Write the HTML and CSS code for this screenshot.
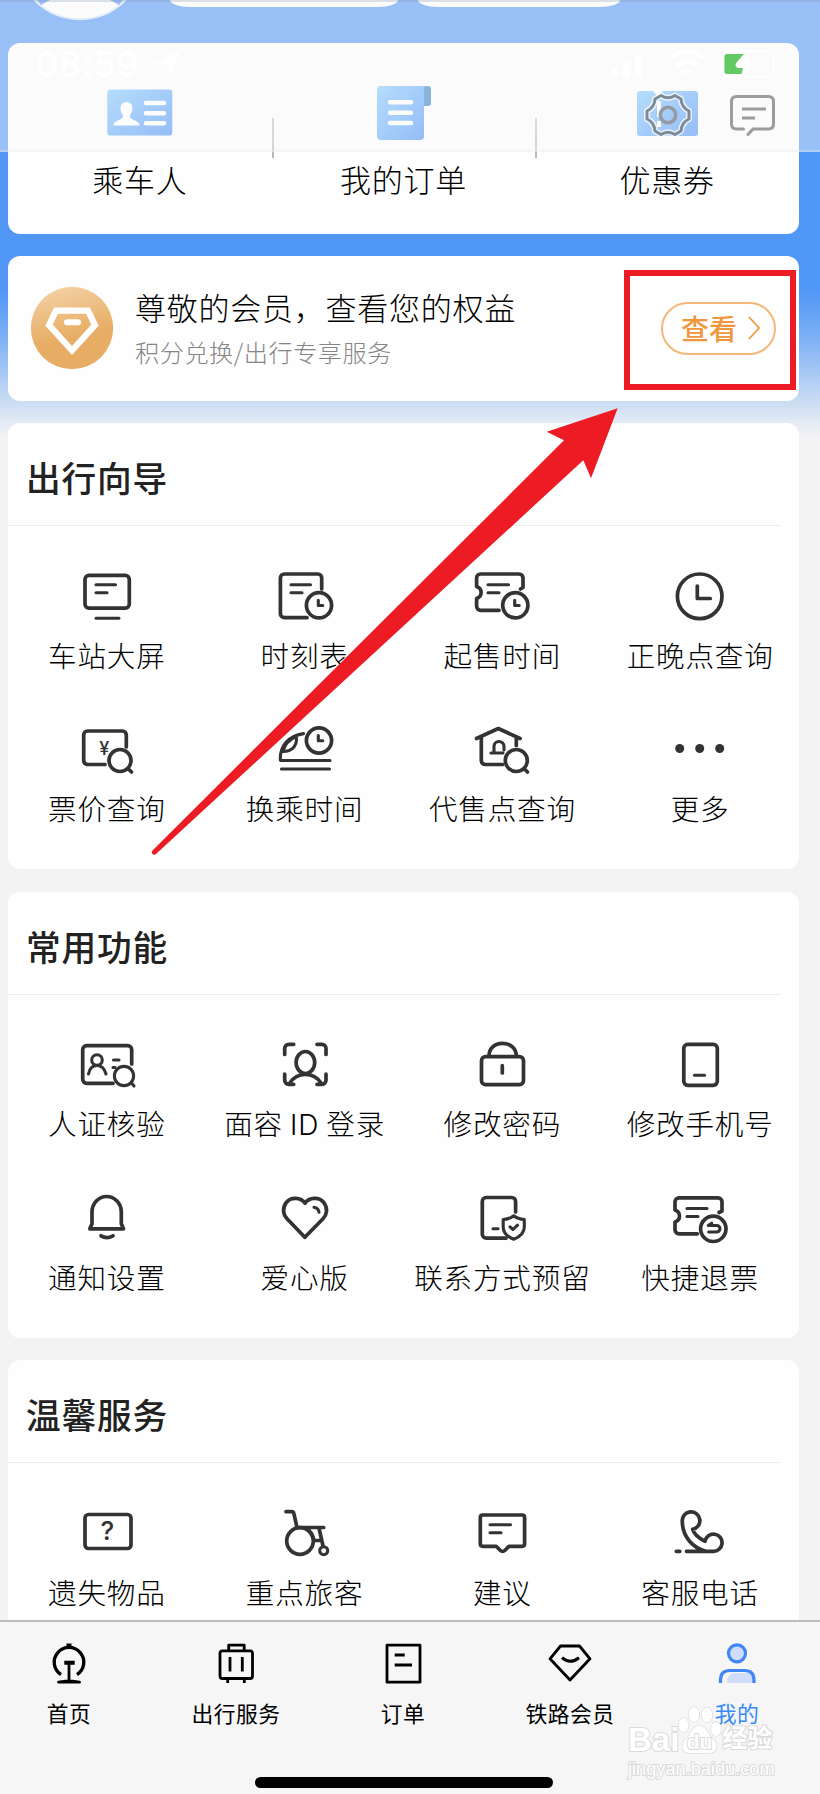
FILE: index.html
```html
<!DOCTYPE html>
<html lang="zh-CN">
<head>
<meta charset="utf-8">
<title>我的</title>
<link rel="stylesheet" href="styles.css">
</head>
<body>
<div class="phone">
  <main class="content">
    <div class="profile">
      <svg class="avatar" width="130" height="20" viewBox="0 0 130 20"><circle cx="65" cy="-45" r="64" fill="#fff" stroke="#d6e6fa" stroke-width="2"/><path d="M22 0h13l-9 5zM108 0H95l9 5z" fill="#4f96f5"/></svg>
      <span class="pill pill-wide"></span>
      <span class="pill"></span>
    </div>

    <section class="card shortcuts">
      <div class="shortcut">
        <svg class="pic" width="70" height="60" viewBox="0 0 70 60"><defs><linearGradient id="g" x1="0" y1="0" x2="1" y2="1"><stop offset="0" stop-color="#82c8fc"/><stop offset="1" stop-color="#4a90f7"/></linearGradient></defs><rect x="2.3" y="6.5" width="65" height="46" rx="3" fill="url(#g)"/><path d="M21.500 19c-4 0-6.300 3-6 7 .2 3 1.500 4.500 2.500 6.500 0 3-2 3.500-5.500 5C10 38.700 8.500 40 8.300 42.500h26.300c-.3-2.500-2-3.800-4.500-5-3.300-1.500-5.300-2-5.300-5 1-2 2.500-3.500 2.700-6.500.3-4-2-7-6-7z" fill="#fff"/><path d="M41 20h18M41 30.300h18M41 40.300h18" stroke="#fff" stroke-width="4.500" stroke-linecap="round"/></svg>
        <span>乘车人</span>
      </div>
      <div class="shortcut">
        <svg class="pic" width="70" height="60" viewBox="0 0 70 60"><path d="M54 3h6a3 3 0 0 1 3 3v14a3 3 0 0 1-3 3h-6z" fill="#387fcb"/><path d="M13 3h44a6 6 0 0 0-1 5v45a4 4 0 0 1-4 4H13a4 4 0 0 1-4-4V7a4 4 0 0 1 4-4z" fill="url(#g)"/><path d="M22 19.300h21M22 29.700h21M22 40h21" stroke="#fff" stroke-width="4.500" stroke-linecap="round"/></svg>
        <span>我的订单</span>
      </div>
      <div class="shortcut">
        <svg class="pic" width="70" height="60" viewBox="0 0 70 60"><path d="M8 8h13l5 6 5-6h32a3 3 0 0 1 3 3v39a3 3 0 0 1-3 3H8a3 3 0 0 1-3-3V11a3 3 0 0 1 3-3z" fill="url(#g)"/><path d="M27 18v26" stroke="#fff" stroke-width="4" stroke-dasharray="16 4"/></svg>
        <span>优惠券</span>
      </div>
    </section>

    <section class="card member">
      <svg width="84" height="84" viewBox="0 0 84 84"><defs><linearGradient id="gold" x1=".4" y1="0" x2=".55" y2=".6"><stop offset="0" stop-color="#f3cfa2"/><stop offset="1" stop-color="#e7ad64"/></linearGradient></defs><circle cx="42" cy="42" r="41.200" fill="url(#gold)"/><path d="M26 24.700h32l7 14.500L42 64.500 19 39.200z" fill="none" stroke="#fff" stroke-width="6.200"/><path d="M37 36.300h11" stroke="#fff" stroke-width="6" stroke-linecap="round"/></svg>
      <div class="member-text">
        <div class="member-title">尊敬的会员，查看您的权益</div>
        <div class="member-sub">积分兑换/出行专享服务</div>
      </div>
      <div class="view-btn"><span>查看</span><svg width="14" height="26" viewBox="0 0 14 26"><path d="M2 2l10 11L2 24" fill="none" stroke="#f0963c" stroke-width="1.800"/></svg></div>
    </section>

    <section class="card group">
      <h2>出行向导</h2>
      <div class="grid">
        <div class="item"><svg viewBox="0 0 80 60"><rect x="18" y="10.400" width="44.300" height="32.800" rx="4"/><path class="thin" d="M29 19.700h19.500M29 27.700h11M29 53.300h23"/></svg><span>车站大屏</span></div>
        <div class="item"><svg viewBox="0 0 80 60"><path d="M56.700 24V13a4 4 0 0 0-4-4H19.400a4 4 0 0 0-4 4v35.700a4 4 0 0 0 4 4H42"/><circle cx="54" cy="40.300" r="12.600"/><path class="thin" d="M26 19.700h19.500M26 27.700h11M53.300 35.300v5.200h4.500"/></svg><span>时刻表</span></div>
        <div class="item"><svg viewBox="0 0 80 60"><path d="M58.500 24l2.500-1.500V13a4 4 0 0 0-4-4H18.600a4 4 0 0 0-4 4v8.500c3 1 4.500 3 4.500 6s-1.500 5-4.500 6v7.800a4 4 0 0 0 4 4H37"/><circle cx="53.300" cy="40.300" r="12.600"/><path class="thin" d="M26 19.700h20.500M26 27.700h11M52.700 35.300v5.200h4.500"/></svg><span>起售时间</span></div>
        <div class="item"><svg viewBox="0 0 80 60"><circle cx="39.700" cy="31.300" r="22.300"/><path d="M37.300 21v12.500h13"/></svg><span>正晚点查询</span></div>
        <div class="item"><svg viewBox="0 0 80 60"><path d="M59.300 28V16a4 4 0 0 0-4-4H20.700a4 4 0 0 0-4 4v25.500a4 4 0 0 0 4 4H38"/><circle cx="53" cy="41.500" r="11"/><path d="M61 49.500l3.500 3.500"/><text class="glyph" x="37.300" y="35.500" font-size="18">¥</text></svg><span>票价查询</span></div>
        <div class="item"><svg viewBox="0 0 80 60"><path class="thin" d="M38.500 14.600C23 17 14.500 27 15.400 41.500H65M16.500 50H64.500M31 17.500c2 8-3 15-13 15"/><path class="thin" d="M31 17.500c-7 3-11.500 8-13 15"/><circle cx="54" cy="21.500" r="12.600"/><path class="thin" d="M53.300 16.500v5.200h4.500"/></svg><span>换乘时间</span></div>
        <div class="item"><svg viewBox="0 0 80 60"><path d="M14.500 19.500l21.800-10 21.800 10M19.300 19v22.500a4 4 0 0 0 4 4H40.500M54.300 19v7.500"/><path class="thin" d="M29 34h12M32 34v-6.500a5 5 0 0 1 10 0V31"/><circle cx="54.300" cy="41.500" r="11"/><path d="M62 49.500l3.500 3.500"/></svg><span>代售点查询</span></div>
        <div class="item"><svg viewBox="0 0 80 60"><g class="solid"><circle cx="19.700" cy="29.500" r="4.500"/><circle cx="39.700" cy="29.500" r="4.500"/><circle cx="59.700" cy="29.500" r="4.500"/></g></svg><span>更多</span></div>
      </div>
    </section>

    <section class="card group">
      <h2>常用功能</h2>
      <div class="grid">
        <div class="item"><svg viewBox="0 0 80 60"><path d="M64.700 30V15.700a4 4 0 0 0-4-4H19.700a4 4 0 0 0-4 4v29.600a4 4 0 0 0 4 4H46"/><circle class="thin" cx="30" cy="26" r="5.300"/><path class="thin" d="M21.500 40c1-5.500 4-8.500 8.500-8.500s7.500 3 9 8.500M46.500 26H52M46 33.500h2M64.500 49l2.500 3"/><circle class="thin" cx="57" cy="42" r="9.600"/></svg><span>人证核验</span></div>
        <div class="item"><svg viewBox="0 0 80 60"><path d="M19.700 20.500v-6.200a4 4 0 0 1 4-4h5M52 10.300h5a4 4 0 0 1 4 4v6.200M19.700 40v6.300a4 4 0 0 0 4 4h5M52 50.300h5a4 4 0 0 0 4-4V40M24.700 49c4-6 9-8.500 15.700-8.500s11.700 2.500 15.700 8.500"/><ellipse cx="40.400" cy="28.500" rx="9.300" ry="11"/></svg><span>面容 <span class="latin">ID</span> 登录</span></div>
        <div class="item"><svg viewBox="0 0 80 60"><rect x="19.500" y="22.700" width="42" height="28" rx="4"/><path d="M27 22c0-7.500 5.500-12.700 13.500-12.700S54.300 14.500 54.300 22M40.300 31.500v7.500"/></svg><span>修改密码</span></div>
        <div class="item"><svg viewBox="0 0 80 60"><rect x="23.800" y="10.300" width="33.500" height="41" rx="4"/><path class="thin" d="M34.500 41.300h10"/></svg><span>修改手机号</span></div>
        <div class="item"><svg viewBox="0 0 80 60"><path d="M22.800 41.800l2.200-5V25a14.650 15.500 0 0 1 29.300 0v11.800l2.200 5zM34 48.800q5.700 3.500 12 0"/></svg><span>通知设置</span></div>
        <div class="item"><svg viewBox="0 0 80 60"><path d="M40 16.200C36 10.500 26 9.500 21.300 15.500c-4.500 6-3 12.500 1 16.500L39.800 50.300 57.800 32c4-4 5.500-10.500 1-16.500C54 9.500 44 10.500 40 16.200z"/><path class="thin" d="M49 20.200q4.500.8 5 5"/></svg><span>爱心版</span></div>
        <div class="item"><svg viewBox="0 0 80 60"><path d="M53.600 25V14.500a4 4 0 0 0-4-4H24.300a4 4 0 0 0-4 4v32.700a4 4 0 0 0 4 4H44"/><path class="thin" d="M31 41.800h5M51.700 28.800c3 2.500 6.500 3.500 10.600 3.700V40c0 6-5 10-10.600 12.300C46 50 41.200 46 41.200 40v-7.500c4-.2 7.500-1.200 10.500-3.700zM48 39.800l3 2.700 4.500-4.300"/></svg><span>联系方式预留</span></div>
        <div class="item"><svg viewBox="0 0 80 60"><path d="M59 25.500l3-1.500v-9.200a4 4 0 0 0-4-4H19a4 4 0 0 0-4 4V23c3 1 4.500 3 4.500 6S18 34 15 35v7.800a4 4 0 0 0 4 4h18.300"/><circle cx="53.300" cy="41.800" r="12.700"/><path class="thin" d="M27 21.500h20M27 29.500h11M51.700 36.200l-3.500 2.300h8.500a3.200 3.200 0 0 1 0 6.500h-8"/></svg><span>快捷退票</span></div>
      </div>
    </section>

    <section class="card group">
      <h2>温馨服务</h2>
      <div class="grid">
        <div class="item"><svg viewBox="0 0 80 60"><rect x="18" y="12.500" width="46" height="34" rx="3.500"/><text class="glyph" x="40.300" y="38" font-size="26">?</text></svg><span>遗失物品</span></div>
        <div class="item"><svg viewBox="0 0 80 60"><path d="M21 9.700h5.500q2 0 2.400 2L32 25.500h26.700M54 26l4 18M48.700 38.500h7.500M41 26q6 4 7.500 11"/><circle cx="35" cy="39" r="13.300"/><circle class="thin" cx="58.700" cy="48.700" r="4"/></svg><span>重点旅客</span></div>
        <div class="item"><svg viewBox="0 0 80 60"><path d="M20.800 13h39.300q2.500 0 2.500 2.500v26.300q0 2.500-2.500 2.500H47l-4 4q-2.400 2-4.800 0l-4-4H20.800q-2.500 0-2.500-2.500V15.500q0-2.500 2.500-2.500z"/><path class="thin" d="M28 22.700h20.500M28 30.700h11"/></svg><span>建议</span></div>
        <div class="item"><svg viewBox="0 0 80 60"><path d="M16.300 49.300h3.500M26.500 49.300h26.200a8.600 8.600 0 1 0-7.700-10c-6-3-11-7-12.300-12A8.800 8.800 0 1 0 22.300 19.500C22.500 35 33 46 46 49.300"/></svg><span>客服电话</span></div>
      </div>
    </section>
  </main>

  <nav class="tabbar">
    <div class="tab"><svg viewBox="0 0 48 48"><path d="M16 34.700a14.800 14.800 0 1 1 16 0" stroke-width="3.300"/><path d="M21.500 5.500h5M19.300 22.700h10.400" stroke-width="4"/><path d="M24 24v18M13.500 42.200l7-1h7l7 1z"/></svg><span>首页</span></div>
    <div class="tab"><svg viewBox="0 0 48 48"><rect x="8" y="10.800" width="32.500" height="27.700" rx="2.500"/><path d="M16.700 10V5.200h15.500V10M18 17v14.500M30.300 17v14.500M15.700 39v4M32.300 39v4"/></svg><span>出行服务</span></div>
    <div class="tab"><svg viewBox="0 0 48 48"><path d="M8 5.200h33v37H8zM15.700 15h10M15.700 25H33"/></svg><span>订单</span></div>
    <div class="tab"><svg viewBox="0 0 48 48"><path d="M14.500 6h19L44 18.800 24 40 4 18.800z"/><path d="M16 17.700q8 7 17 0" stroke-width="3"/></svg><span>铁路会员</span></div>
    <div class="tab active"><svg viewBox="0 0 48 48"><circle cx="24" cy="13.300" r="8.500" fill="#cfddf8"/><path d="M14 43q0-10 8-10h19v10z" fill="#cfddf8" stroke="none"/><path d="M7.500 43v-3q0-9.500 9.500-9.500h14.500q9.500 0 9.500 9.500v3"/></svg><span>我的</span></div>
  </nav>

  <div class="header">
    <div class="status">
      <span class="clock">08:59</span>
      <svg class="locate" width="32" height="32" viewBox="0 0 32 32"><path d="M3 16L29 3 18 30V16z" fill="#fff"/></svg>
      <svg class="signals" width="190" height="36" viewBox="0 0 190 36"><g fill="#fff"><rect x="11" y="22" width="7" height="9" rx="2"/><rect x="23" y="16" width="7" height="15" rx="2"/><rect x="35" y="10" width="7" height="21" rx="2"/></g><path d="M70 12q17-13 34 0M76 20q11-8 22 0M82 27q5-4 10 0" fill="none" stroke="#fff" stroke-width="4"/><rect x="122" y="5" width="52" height="26" rx="7" fill="none" stroke="#fff" stroke-width="2"/><path d="M127 8h17l-8 9q-1.500 4 2 5h5l-1.500 6H127q-2.500 0-2.500-2.500v-15Q124.500 8 127 8z" fill="#63ca61"/><path d="M149 8l-9 11h6l-3 10 12-13h-6z" fill="#fff"/></svg>
    </div>
    <div class="actions">
      <svg width="50" height="50" viewBox="0 0 50 50"><g fill="none" stroke-linejoin="round"><path d="M18 5.500Q25 10 32 5.500L38 9Q38.500 17.500 46 21V29Q38.500 32.500 38 41L32 44.500Q25 40 18 44.500L12 41Q11.500 32.500 4 29V21Q11.500 17.500 12 9Z" stroke="#fff" stroke-opacity=".75" stroke-width="6"/><path d="M18 5.500Q25 10 32 5.500L38 9Q38.500 17.500 46 21V29Q38.500 32.500 38 41L32 44.500Q25 40 18 44.500L12 41Q11.500 32.500 4 29V21Q11.500 17.500 12 9Z" stroke="#7f8a97" stroke-width="3"/><circle cx="25" cy="25" r="7.700" stroke="#949aa2" stroke-width="3.600"/></g></svg>
      <svg width="50" height="50" viewBox="0 0 50 50"><path d="M16.500 39H9.500Q4.500 39 4.500 34V11.500Q4.500 6.500 9.500 6.500h32q5 0 5 5V34q0 5-5 5H26l-5 5.500" fill="none" stroke="#9c9c9c" stroke-width="3" stroke-linecap="round"/><path d="M15 19h24M15 28h13" stroke="#9c9c9c" stroke-width="3"/></svg>
    </div>
  </div>

  <div class="watermark">
    <div class="wm-top"><span>Bai</span><svg width="44" height="48" viewBox="0 0 44 48"><g fill="#fff" stroke="#dcdcdc" stroke-width="1.300"><ellipse cx="5.500" cy="19" rx="5" ry="7"/><ellipse cx="16" cy="8.500" rx="5.300" ry="7.500"/><ellipse cx="29" cy="9" rx="5.300" ry="7.500"/><ellipse cx="38" cy="23" rx="5" ry="7"/><path d="M21 20c-7 0-7 7-12 12-6 5-7 15 4 15h17c11 0 10-10 4-15-5-5-6-12-13-12z"/></g><text x="21.500" y="43" text-anchor="middle" class="wm-du">du</text></svg><span class="wm-cn">经验</span></div>
    <div class="wm-url">jingyan.baidu.com</div>
  </div>
  <div class="home-bar"></div>
  <svg class="marks" width="820" height="1794" viewBox="0 0 820 1794"><rect x="627" y="273" width="166" height="114" fill="none" stroke="#ed1c24" stroke-width="6"/><path d="M617.700 408.300L546.700 431.700 564 440.300 152.500 850.500q-1.500 2 0 3.500t3.500 0L583.300 460.300 591 478.300z" fill="#ed1c24"/></svg>
</div>
</body>
</html>
```

FILE: styles.css
```css
* { box-sizing: border-box; }
body { margin: 0; }
.phone {
  position: relative;
  display: flex;
  flex-direction: column;
  width: 820px;
  height: 1794px;
  overflow: hidden;
  color: #000;
  font-family: "Noto Sans CJK SC", sans-serif;
  font-weight: 300;
  background: #f3f3f4;
}
.content {
  display: flex;
  flex-direction: column;
  gap: 22.400px;
  height: 1620px;
  flex: none;
  overflow: hidden;
  padding: 0 21px 0 8px;
  background: linear-gradient(#4f96f5 0, #5097f6 290px, #80b2f5 340px, #c9dcf3 401px, #e4ebf4 423px, #f3f3f4 437px);
}
.profile { display: flex; height: 20.200px; padding-left: 7px; flex: none; align-items: flex-start; gap: 20px; }
.avatar { display: block; margin-right: 5px; }
.pill { width: 202px; height: 7px; background: #fff; border-radius: 0 0 20px 20px / 0 0 7px 7px; }
.pill-wide { width: 228px; }
.card { flex: none; background: #fefefe; border-radius: 12px; }

.shortcuts { height: 191px; display: grid; grid-template-columns: repeat(3, 1fr); padding-top: 40px; }
.shortcut { display: flex; flex-direction: column; align-items: center; font-size: 31px; letter-spacing: .7px; line-height: 44px; gap: 14px; }
.shortcut + .shortcut { background: linear-gradient(#c4c4c4, #b8b8b8) 0 35px / 2px 40px no-repeat; }
.shortcut .pic { display: block; }

.member { height: 145px; display: flex; align-items: center; padding: 0 23px 0 22px; }
.member-text { flex: 1; padding-left: 21px; }
.member-title { font-size: 31px; letter-spacing: .75px; line-height: 46px; margin-top: -2px; white-space: nowrap; }
.member-sub { font-size: 24.200px; letter-spacing: .5px; line-height: 36px; margin-top: 4px; color: #858585; }
.view-btn {
  display: flex; align-items: center; justify-content: space-between;
  width: 115px; height: 53px; padding: 0 13px 0 18px;
  border: 2px solid #f4b878; border-radius: 27px;
  color: #f0963c; font-size: 28px; font-weight: 500; line-height: 1;
}
.view-btn span { margin-top: -1px; }

.group { height: 446px; }
.group h2 {
  margin: 0 18px 0 0; padding-left: 18px; height: 103px; line-height: 108.500px;
  border-bottom: 1px solid #ececec;
  color: #222; font-size: 34.700px; letter-spacing: .8px; font-weight: 500;
}
.grid { display: grid; grid-template-columns: repeat(4, 1fr); grid-auto-rows: 153.500px; padding-top: 39px; }
.item { display: flex; flex-direction: column; align-items: center; gap: 7.500px; font-size: 28.600px; letter-spacing: .8px; line-height: 44px; white-space: nowrap; }
.item svg { width: 80px; height: 60px; fill: none; stroke: #333; stroke-width: 3.700px; stroke-linecap: round; stroke-linejoin: round; }
.item svg .thin { stroke-width: 3.100px; }
.item svg .solid { fill: #333; stroke: none; }
.item svg .glyph { fill: #333; stroke: none; text-anchor: middle; font-family: Inter, sans-serif; font-weight: 500; letter-spacing: 0; }
.latin { font-family: Inter, sans-serif; font-size: 28px; }

.tabbar {
  flex: none; height: 174px; padding: 18px 14px 0 0;
  display: grid; grid-template-columns: repeat(5, 167px); justify-content: center;
  background: #f6f6f6; border-top: 2px solid #bdbdbd;
}
.tab { display: flex; flex-direction: column; align-items: center; gap: 7.500px; font-size: 21.800px; letter-spacing: .5px; line-height: 34px; font-weight: 400; color: #000; }
.tab svg { width: 48px; height: 48px; fill: none; stroke: #000; stroke-width: 2.800px; stroke-linejoin: round; }
.tab.active { color: #3a8bf7; }
.tab.active svg { stroke: #3f86f8; stroke-width: 3.200px; }

.header {
  position: absolute; inset: 0 0 auto 0; height: 152px;
  background: rgba(249, 249, 249, .43);
  border-top: 2px solid rgba(120, 140, 170, .25);
  border-bottom: 2px solid rgba(235, 235, 235, .35);
}
.status { display: flex; align-items: center; height: 36px; margin: 44px 30px 0 35px; color: #fff; }
.clock { font: 500 36px/36px Inter, sans-serif; letter-spacing: .5px; }
.locate { margin-left: 12px; }
.signals { margin-left: auto; }
.actions { display: flex; justify-content: flex-end; gap: 34px; padding-right: 43px; margin-top: 8px; }

.home-bar { position: absolute; left: 255px; bottom: 6px; width: 298px; height: 11px; border-radius: 6px; background: #000; }
.watermark { position: absolute; left: 628px; top: 1705px; width: 150px; color: #fff; font-family: "Liberation Sans", "Noto Sans CJK SC", sans-serif; -webkit-text-stroke: 2px #dadada; paint-order: stroke fill; }
.wm-top { display: flex; align-items: flex-end; height: 50px; font-size: 33px; font-weight: 700; line-height: 30px; white-space: nowrap; }
.wm-top svg { margin: 0 0 1px -1px; flex: none; }
.wm-cn { font-size: 25px; line-height: 33px; }
.wm-du { font-size: 21px; font-weight: 700; fill: #fff; stroke: #dadada; stroke-width: 2px; paint-order: stroke fill; }
.wm-url { font-size: 18.200px; font-weight: 400; line-height: 24px; margin-top: 2px; }
.marks { position: absolute; left: 0; top: 0; pointer-events: none; }
```
